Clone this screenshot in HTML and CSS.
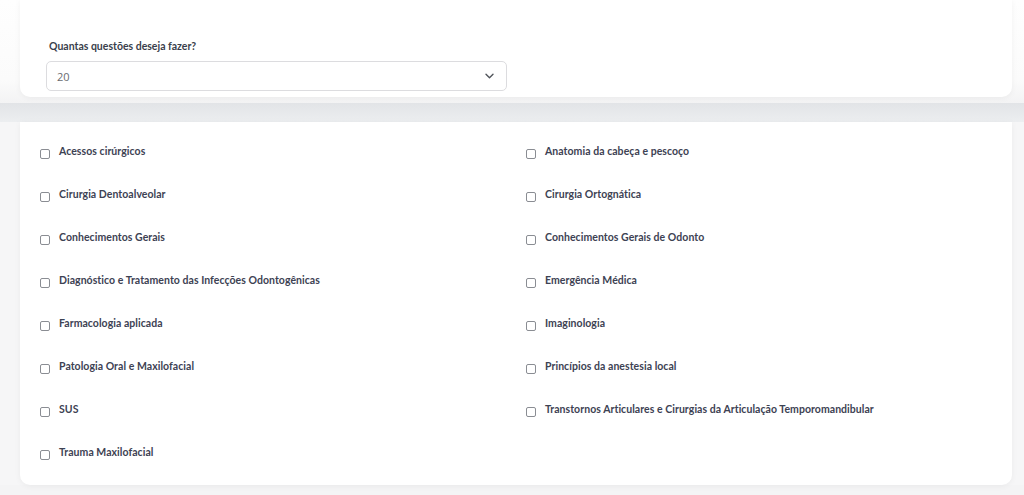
FILE: index.html
```html
<!DOCTYPE html>
<html lang="pt-BR">
<head>
<meta charset="utf-8">
<title>Questões</title>
<link rel="stylesheet" href="styles.css">
</head>
<body>
<section class="top">
  <div class="card card-top">
    <label class="field-label" for="qtd">Quantas questões deseja fazer?</label>
    <div class="select">
      <span class="select-value">20</span>
      <svg class="chevron" width="9" height="6" viewBox="0 0 9 6"><path d="M1 1.2l3.5 3.5 3.5-3.5" fill="none" stroke="#50545a" stroke-width="1.4" stroke-linecap="round" stroke-linejoin="round"/></svg>
    </div>
  </div>
</section>
<div class="band"></div>
<section class="bottom">
  <div class="card card-list">
    <div class="item"><span class="box"></span><span class="txt">Acessos cirúrgicos</span></div>
    <div class="item"><span class="box"></span><span class="txt">Anatomia da cabeça e pescoço</span></div>
    <div class="item"><span class="box"></span><span class="txt">Cirurgia Dentoalveolar</span></div>
    <div class="item"><span class="box"></span><span class="txt">Cirurgia Ortognática</span></div>
    <div class="item"><span class="box"></span><span class="txt">Conhecimentos Gerais</span></div>
    <div class="item"><span class="box"></span><span class="txt">Conhecimentos Gerais de Odonto</span></div>
    <div class="item"><span class="box"></span><span class="txt">Diagnóstico e Tratamento das Infecções Odontogênicas</span></div>
    <div class="item"><span class="box"></span><span class="txt">Emergência Médica</span></div>
    <div class="item"><span class="box"></span><span class="txt">Farmacologia aplicada</span></div>
    <div class="item"><span class="box"></span><span class="txt">Imaginologia</span></div>
    <div class="item"><span class="box"></span><span class="txt">Patologia Oral e Maxilofacial</span></div>
    <div class="item"><span class="box"></span><span class="txt">Princípios da anestesia local</span></div>
    <div class="item"><span class="box"></span><span class="txt">SUS</span></div>
    <div class="item"><span class="box"></span><span class="txt">Transtornos Articulares e Cirurgias da Articulação Temporomandibular</span></div>
    <div class="item"><span class="box"></span><span class="txt">Trauma Maxilofacial</span></div>
  </div>
</section>
</body>
</html>
```
FILE: styles.css
```css
* { box-sizing: border-box; }
html, body { margin: 0; padding: 0; }
body {
  font-family: Lato, "Open Sans", Arial, sans-serif;
  background: #f4f4f5;
  color: #3b4050;
  overflow: hidden;
  height: 495px;
}
.top {
  background: linear-gradient(#fefefe 0, #fbfbfb 80px, #f3f3f4 100%);
  padding: 0 12px 6px 20px;
}
.card {
  background: #fff;
  border-radius: 10px;
  box-shadow: 0 1px 6px rgba(0,0,0,0.05);
}
.card-top {
  border-radius: 0 0 10px 10px;
  padding: 39px 26px 6px 26px;
  display: flex;
  flex-direction: column;
}
.field-label {
  font-size: 10.5px;
  font-weight: 700;
  line-height: 14px;
  color: #3a3f4c;
  margin: 0 0 8px 3px;
}
.select {
  width: 461px;
  height: 30px;
  border: 1px solid #dcdcdf;
  border-radius: 5px;
  display: flex;
  align-items: center;
  justify-content: space-between;
  padding: 0 12px 0 10px;
}
.select-value {
  font-family: "Open Sans", Lato, sans-serif;
  font-size: 11px;
  color: #6a6c70;
}
.chevron { display: block; }
.band {
  height: 19px;
  background: linear-gradient(#e2e4e7, #eceef0);
}
.bottom {
  padding: 0 12px 0 20px;
  background: #f6f6f7;
}
.card-list {
  border-radius: 0 0 10px 10px;
  padding: 19px 0 0 20px;
  display: grid;
  grid-template-columns: 486px 1fr;
  grid-auto-rows: 43px;
}
.item {
  display: flex;
  align-items: flex-start;
  gap: 9px;
  line-height: 20px;
  font-size: 10.5px;
  font-weight: 700;
  color: #3d4253;
}
.box {
  width: 10px;
  height: 10px;
  border: 1px solid #8a8d93;
  border-radius: 2px;
  margin-top: 8px;
  flex: none;
  background: #fff;
}
.txt { letter-spacing: 0.05px; }
```
